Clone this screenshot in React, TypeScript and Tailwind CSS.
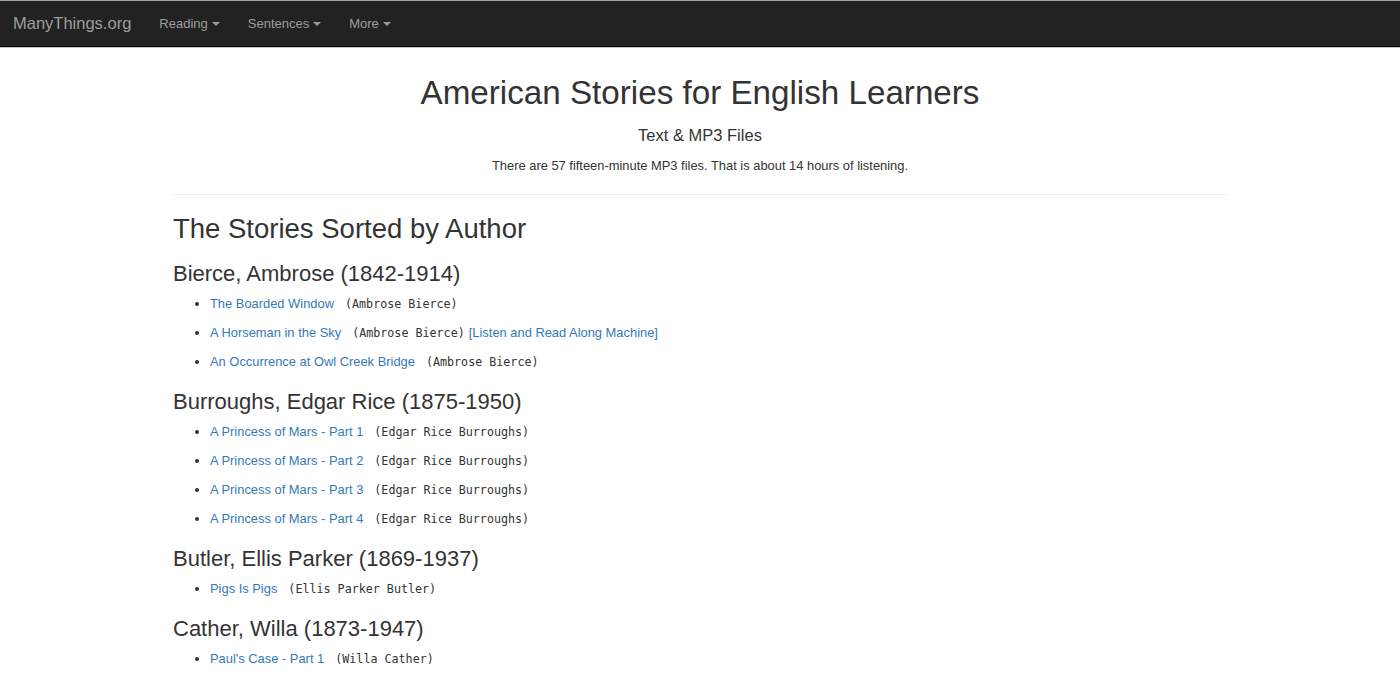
import React from "react"

const authors = [
  {
    name: "Bierce, Ambrose (1842-1914)",
    by: "Ambrose Bierce",
    stories: [
      { title: "The Boarded Window" },
      { title: "A Horseman in the Sky", extra: "[Listen and Read Along Machine]" },
      { title: "An Occurrence at Owl Creek Bridge" },
    ],
  },
  {
    name: "Burroughs, Edgar Rice (1875-1950)",
    by: "Edgar Rice Burroughs",
    stories: [
      { title: "A Princess of Mars - Part 1" },
      { title: "A Princess of Mars - Part 2" },
      { title: "A Princess of Mars - Part 3" },
      { title: "A Princess of Mars - Part 4" },
    ],
  },
  {
    name: "Butler, Ellis Parker (1869-1937)",
    by: "Ellis Parker Butler",
    stories: [{ title: "Pigs Is Pigs" }],
  },
  {
    name: "Cather, Willa (1873-1947)",
    by: "Willa Cather",
    stories: [{ title: "Paul's Case - Part 1" }],
  },
]

const navItems = ["Reading", "Sentences", "More"]

function Caret() {
  return (
    <span className="ml-[4px] inline-block h-0 w-0 border-x-[4px] border-t-[4px] border-x-transparent border-t-[#9d9d9d] align-middle" />
  )
}

export default function App() {
  return (
    <div
      className="min-h-screen bg-white text-[#333]"
      style={{ fontFamily: '"Liberation Sans", Arial, sans-serif' }}
    >
      {/* Navbar */}
      <div className="border-b border-[#c8c8c8]">
        <nav className="flex h-[47px] items-center border-t border-b border-t-[#a0a0a0] border-b-[#080808] bg-[#222]">
          <a className="pl-[13px] pr-[14px] text-[16.5px] text-[#9d9d9d]">ManyThings.org</a>
          <ul className="flex">
            {navItems.map((item) => (
              <li key={item} className="px-[14px] text-[13px] text-[#9d9d9d]">
                {item}
                <Caret />
              </li>
            ))}
          </ul>
        </nav>
      </div>

      <div className="mx-auto w-[1054px]">
        {/* Header */}
        <div className="pt-[25px] text-center">
          <h1 className="text-[33.2px] leading-[40px]">American Stories for English Learners</h1>
          <h4 className="mt-[11px] text-[16.5px] leading-[22px]">Text &amp; MP3 Files</h4>
          <p className="mt-[11px] text-[12.9px] leading-[18px]">
            There are 57 fifteen-minute MP3 files. That is about 14 hours of listening.
          </p>
        </div>

        <hr className="mt-[19px] border-t border-[#eee]" />

        {/* Stories */}
        <h2 className="mt-[17px] text-[27.5px] leading-[33px]">The Stories Sorted by Author</h2>

        {authors.map((author, i) => (
          <div key={author.name} className={i === 0 ? "mt-[16px]" : "mt-[13px]"}>
            <h3 className="mb-[2px] text-[22px] leading-[26px]">{author.name}</h3>
            <ul className="list-disc pl-[37px] text-[12.9px]">
              {author.stories.map((s) => (
                <li key={s.title} className="h-[29px] leading-[29px]">
                  <a className="text-[#337ab7]">{s.title}</a>
                  <span
                    className="ml-[11px] text-[11.7px] text-[#333]"
                    style={{ fontFamily: '"DejaVu Sans Mono", "Liberation Mono", monospace' }}
                  >
                    ({author.by})
                  </span>
                  {s.extra && <a className="ml-[4px] text-[#337ab7]">{s.extra}</a>}
                </li>
              ))}
            </ul>
          </div>
        ))}
      </div>
    </div>
  )
}
